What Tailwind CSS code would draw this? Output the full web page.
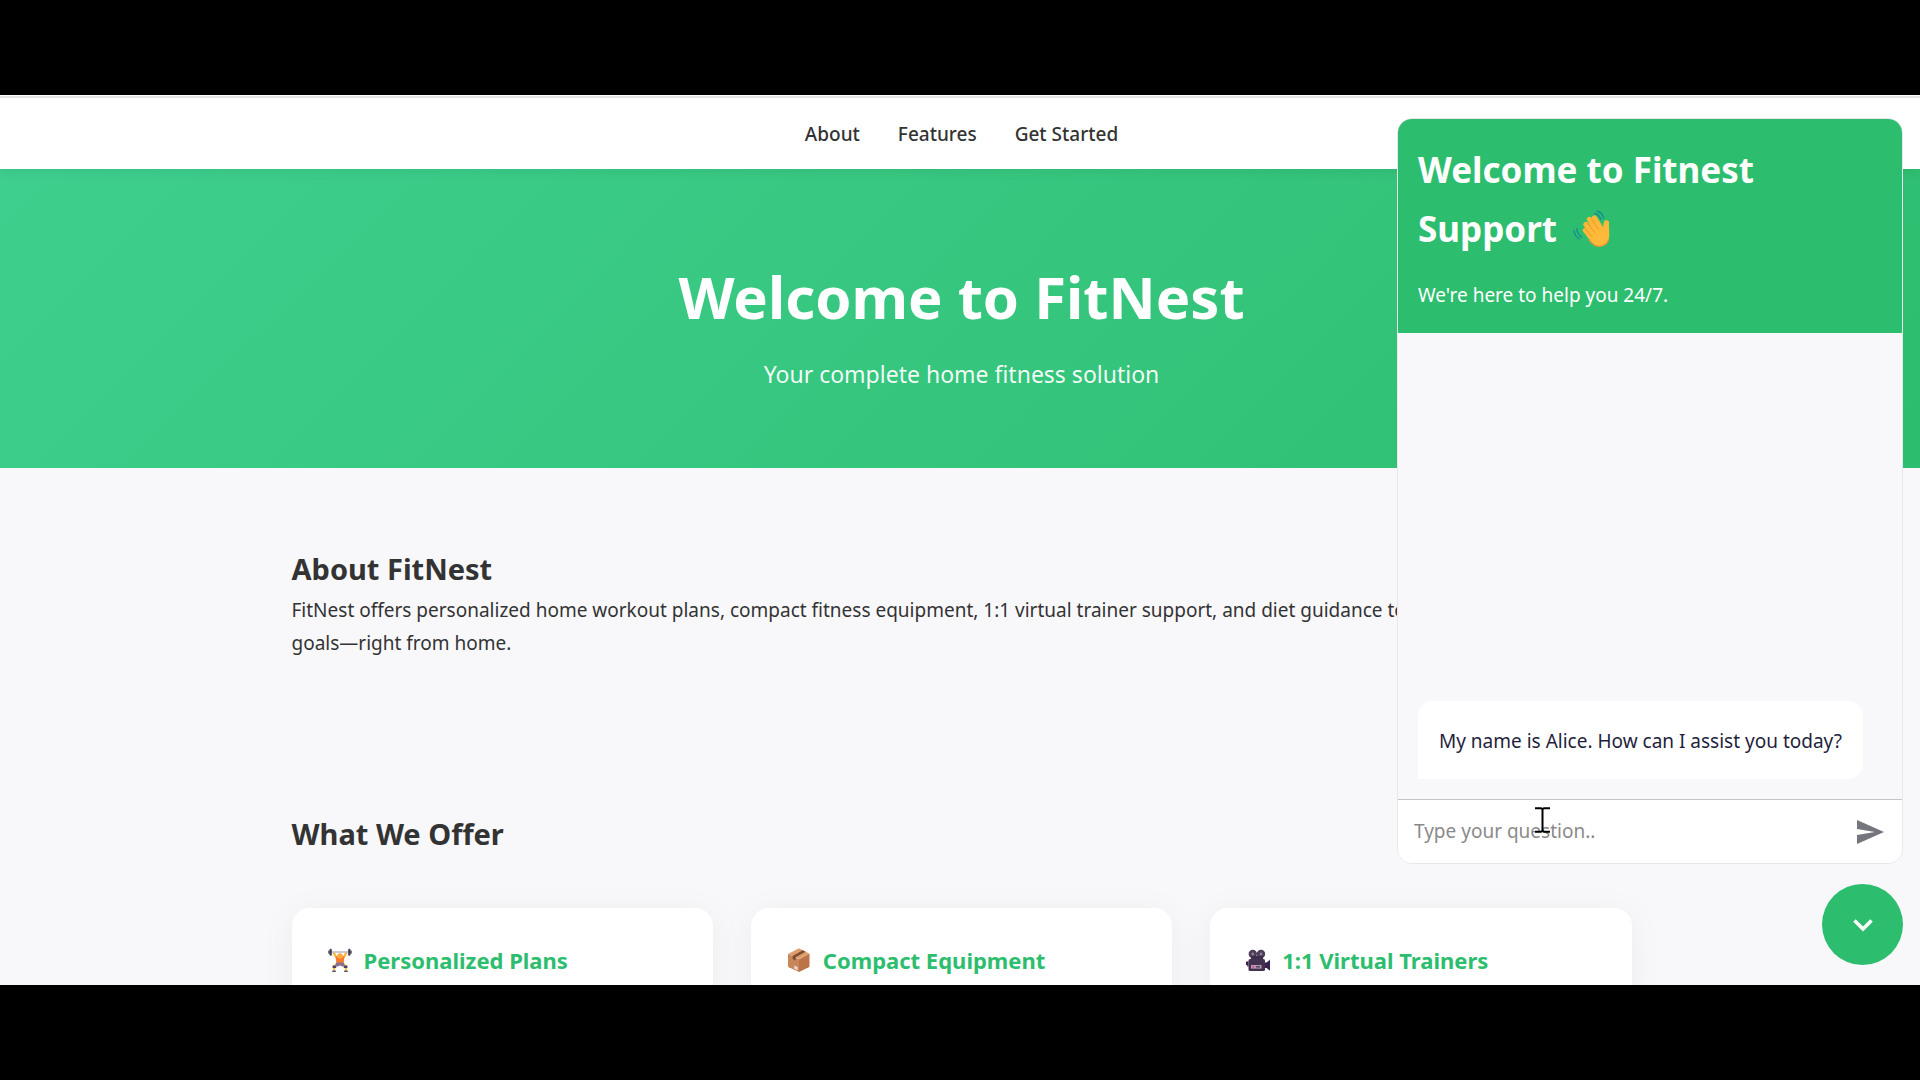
<!DOCTYPE html>
<html lang="en">
<head>
<meta charset="utf-8">
<meta name="viewport" content="width=device-width, initial-scale=1">
<title>FitNest</title>
<script src="https://cdn.jsdelivr.net/npm/@tailwindcss/browser@4"></script>
</head>
<body class="flex h-screen flex-col overflow-hidden bg-black py-[95px] font-['Noto_Sans','Open_Sans',sans-serif] text-[19px] text-[#333]">
<div class="relative flex-1 overflow-hidden border-t border-white bg-[#f8f8fb]">
  <header class="relative z-10 border-t-2 border-[#e3e3e3] bg-white shadow-[0_2px_12px_rgba(0,0,0,0.08)]">
    <nav class="flex h-[71px] items-center justify-center gap-[38px] pt-0.5 pl-[3px] font-medium">
      <a href="#about">About</a>
      <a href="#features">Features</a>
      <a href="#start">Get Started</a>
    </nav>
  </header>

  <section class="bg-linear-135 from-[#3ecf8e] to-[#2dbd6e] pt-[83px] pb-[74px] pl-[3px] text-center text-white">
    <h1 class="text-[58px] leading-[90px] font-bold">Welcome to FitNest</h1>
    <p class="mt-3 text-[23px] leading-10 text-white/95">Your complete home fitness solution</p>
  </section>

  <main class="mx-auto max-w-[1343px] pl-[3px]">
    <section id="about" class="py-[76px]">
      <h2 class="text-[29px] leading-[50px] font-bold">About FitNest</h2>
      <p class="leading-[33px]">FitNest offers personalized home workout plans, compact fitness equipment, 1:1 virtual trainer support, and diet guidance to help you reach your<br>goals—right from home.</p>
    </section>

    <section id="features" class="pt-[73px] pb-[76px]">
      <h2 class="text-[29px] leading-[50px] font-bold">What We Offer</h2>
      <div class="mt-[49px] grid grid-cols-3 gap-[38px] text-[22px] leading-8 font-bold text-[#2dbd6e]">
        <article class="rounded-[18px] bg-white p-9 shadow-[0_5px_36px_rgba(0,0,0,0.05)]">
          <h3 class="flex items-center gap-3">
            <svg class="size-6" viewBox="0 0 24 24" aria-hidden="true">
              <path d="M8.500 16 6.300 18.500 6 22.500M15.500 16l2.200 2.500.3 4" fill="none" stroke="#f7c231" stroke-width="2.200"/>
              <path d="M4.600 17.600h3.600v2.400H4.600zM15.800 17.600h3.600v2.400h-3.600z" fill="#4a3f5c"/>
              <path d="M4.300 22.500h3.500V24H4.300zM16.200 22.500h3.500V24h-3.500z" fill="#5b4b6b"/>
              <path d="M5.500 4.500 8.500 9.500M18.500 4.500l-3 5" stroke="#f9b52c" stroke-width="2.200"/>
              <path d="M7.500 8.600h9l-1 7.400h-7z" fill="#fb7a2b"/>
              <path d="M8.300 14.500h7.400l1.300 4h-2.800L12 17.600 9.800 18.500H7z" fill="#8d6f92"/>
              <circle cx="12" cy="8" r="2.700" fill="#fda83a"/>
              <path d="M2 4h20" stroke="#b3acba" stroke-width="1.300"/>
              <path d="M.3 2.600h1.500v3.200H.3zM22.200 2.600h1.500v3.200h-1.500z" fill="#4a4455"/>
              <rect x="1.600" y=".7" width="2.200" height="7" rx="1" fill="#433b50"/>
              <rect x="20.200" y=".7" width="2.200" height="7" rx="1" fill="#433b50"/>
            </svg>
            Personalized Plans
          </h3>
        </article>
        <article class="rounded-[18px] bg-white p-9 shadow-[0_5px_36px_rgba(0,0,0,0.05)]">
          <h3 class="flex items-center gap-3">
            <svg class="size-6" viewBox="0 0 24 24" aria-hidden="true">
              <path d="M12 .3 22.500 5.800 12 11 1 6z" fill="#dda06c"/>
              <path d="M1 6 12 11.300V24L1.800 19.200Q1 18.800 1 18z" fill="#c9865a"/>
              <path d="M12 11.300 22.500 5.800V18q0 .8-.8 1.300L12 24z" fill="#bb7347"/>
              <path d="M15.800 2.300 18.600 3.800 8.600 9.200v3.300L5.600 11V7.900z" fill="#7d4c33"/>
              <path d="m7.300 17.400 3.300 1.600v3.300l-3.300-1.600z" fill="#f0d8d8"/>
            </svg>
            Compact Equipment
          </h3>
        </article>
        <article class="rounded-[18px] bg-white p-9 shadow-[0_5px_36px_rgba(0,0,0,0.05)]">
          <h3 class="flex items-center gap-3">
            <svg class="size-6" viewBox="0 0 24 24" aria-hidden="true">
              <circle cx="6.800" cy="6" r="4.200" fill="#4b3d57"/>
              <circle cx="15" cy="6" r="4.200" fill="#4b3d57"/>
              <circle cx="6.800" cy="6" r="1.400" fill="#8b7f95"/>
              <circle cx="15" cy="6" r="1.400" fill="#8b7f95"/>
              <path d="M5 8h12v4H5z" fill="#3c2f49"/>
              <rect x="2.500" y="11" width="16.500" height="12" rx="1.500" fill="#42324f"/>
              <path d="M0 13.500h2.500v5H1.200V17H0zM19 14.500h1.500l3.500-2.700v10.900l-3.500-2.700H19z" fill="#38224d"/>
              <path d="M5 17h10.500v3.600H5z" fill="#b79bb5"/>
              <path d="M6 18h2.500v1.600H6z" fill="#e04f8b"/>
              <path d="M10 18h4v1.600h-4z" fill="#5a4868"/>
            </svg>
            1:1 Virtual Trainers
          </h3>
        </article>
      </div>
    </section>
  </main>

  <!-- Support chat widget -->
  <aside class="absolute top-[22px] right-[17px] bottom-5 z-20 flex w-[506px] max-w-[90%] flex-col items-end gap-5" aria-label="Support chat">
    <div class="flex w-full flex-1 flex-col overflow-hidden rounded-[15px] border border-[#e6e8ee] bg-[#f8f8fb]">
      <div class="bg-[#2dbd6e] px-5 py-[21px] text-white">
        <h2 class="text-[35px] leading-[59px] font-bold">Welcome to Fitnest<br>
          <span class="flex items-center gap-4">Support
            <svg class="size-10" viewBox="0 0 40 40" aria-hidden="true">
              <g fill="none" stroke="#168b91" stroke-width="1.300" stroke-linecap="round">
                <path d="M21.500 4.500q4.500.7 6.500 6M24 2q5 1.400 6.800 7M4 19.500q-.3 5 4.500 8.500M1.200 22q.3 5 5.300 8"/>
              </g>
              <g fill="none" stroke="#fdb638" stroke-width="5.200" stroke-linecap="round">
                <path d="m21.500 9 8 13M16.500 10.500 26 24M13 15.500l10 11.500M12.300 21.500l9 9.500M33.300 13.800q-.8 5-1.300 8"/>
              </g>
              <path d="M17 20 25 15l5 4.500q2.500-2 5.500-7.500.8 8 .8 14 0 6-4 9.500-4.800 4-10.300.5Q18 33.500 13 26z" fill="#feb93b"/>
              <path d="m19 10.500 6.500 9.800M14.800 15l7 8.500M12.300 19.800l6.500 7.500" fill="none" stroke="#e8912a" stroke-width=".9" stroke-linecap="round"/>
              <path d="M16 31q5 7.500 11.500 6.300 6-1 8-6" fill="none" stroke="#ed8f36" stroke-width="1.200" stroke-linecap="round"/>
            </svg>
          </span>
        </h2>
        <p class="mt-[21px] leading-[33px]">We're here to help you 24/7.</p>
      </div>
      <div class="flex flex-1 flex-col items-start justify-end p-5">
        <p class="rounded-[15px] rounded-bl-none bg-white px-[21px] pt-6 pb-[21px] leading-[33px] text-[#1f1f3d]">My name is Alice. How can I assist you today?</p>
      </div>
      <form class="flex h-16 items-center border-t border-[#c4c5ca] bg-white pr-[18px] pl-4">
        <input type="text" aria-label="Type your question" placeholder="Type your question.." class="min-w-0 flex-1 placeholder:text-[#8a8a8a] focus:outline-none">
        <button type="button" aria-label="Send">
          <svg class="h-6 w-[27px]" viewBox="0 0 27 24" aria-hidden="true"><path d="M0 0 27 12 0 24V15L18 12 0 9z" fill="#75757d"/></svg>
        </button>
      </form>
    </div>
    <button type="button" aria-label="Close chat" class="flex size-[81px] items-center justify-center rounded-full bg-[#2dbd6e]">
      <svg class="h-[14px] w-[22px]" viewBox="0 0 22 14" aria-hidden="true"><path d="m2.500 2.500 8.500 8.500 8.500-8.500" fill="none" stroke="#fff" stroke-width="3.500"/></svg>
    </button>
    <!-- Text pointer over the question box -->
    <svg class="absolute right-[353px] bottom-[132px] h-[26px] w-[15px]" viewBox="0 0 15 26" aria-hidden="true"><path d="M0 1.200h6l1.500 1 1.500-1h6M0 24.800h6l1.500-1 1.500 1h6M7.500 2v22" fill="none" stroke="#000" stroke-width="2"/></svg>
  </aside>
</div>
</body>
</html>
